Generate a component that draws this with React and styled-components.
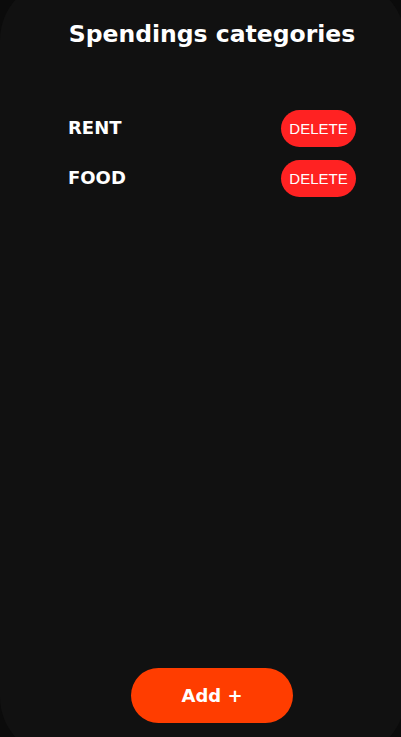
import React from 'react'
import styled, { createGlobalStyle } from 'styled-components'

const GlobalStyle = createGlobalStyle`
  html, body {
    margin: 0;
    padding: 0;
    background: #0b0b0b;
  }
  body {
    font-family: 'DejaVu Sans', 'Liberation Sans', sans-serif;
    overflow: hidden;
  }
`

const Panel = styled.div`
  box-sizing: border-box;
  height: 777px;
  margin: -20px -4px 0 0;
  padding: 38px 49px 34px 68px;
  background: #111111;
  border-radius: 60px;
  display: flex;
  flex-direction: column;
`

const Title = styled.h1`
  margin: 0;
  text-align: center;
  color: #ffffff;
  font-size: 23.5px;
  font-weight: 700;
  line-height: 32px;
`

const List = styled.ul`
  list-style: none;
  margin: 60px 0 0;
  padding: 0;
  display: flex;
  flex-direction: column;
  gap: 13px;
  flex: 1;
`

const Row = styled.li`
  display: flex;
  align-items: center;
  justify-content: space-between;
  height: 37px;
`

const Name = styled.span`
  color: #ffffff;
  font-size: 18px;
  font-weight: 700;
  margin-top: -2px;
`

const DeleteButton = styled.button`
  height: 37px;
  width: 75px;
  padding: 0;
  border: none;
  border-radius: 19px;
  background: #ff2222;
  color: #ffffff;
  font-family: 'Liberation Sans', Arial, sans-serif;
  font-size: 15px;
  cursor: pointer;
`

const Footer = styled.div`
  display: flex;
  justify-content: center;
`

const AddButton = styled.button`
  width: 162px;
  height: 55px;
  border: none;
  border-radius: 28px;
  background: #ff3d00;
  color: #ffffff;
  font-family: 'DejaVu Sans', sans-serif;
  font-size: 18px;
  font-weight: 700;
  cursor: pointer;
`

const categories = ['RENT', 'FOOD']

export default function App() {
  return (
    <>
      <GlobalStyle />
      <Panel>
        <Title>Spendings categories</Title>
        <List>
          {categories.map(name => (
            <Row key={name}>
              <Name>{name}</Name>
              <DeleteButton>DELETE</DeleteButton>
            </Row>
          ))}
        </List>
        <Footer>
          <AddButton>Add +</AddButton>
        </Footer>
      </Panel>
    </>
  )
}
